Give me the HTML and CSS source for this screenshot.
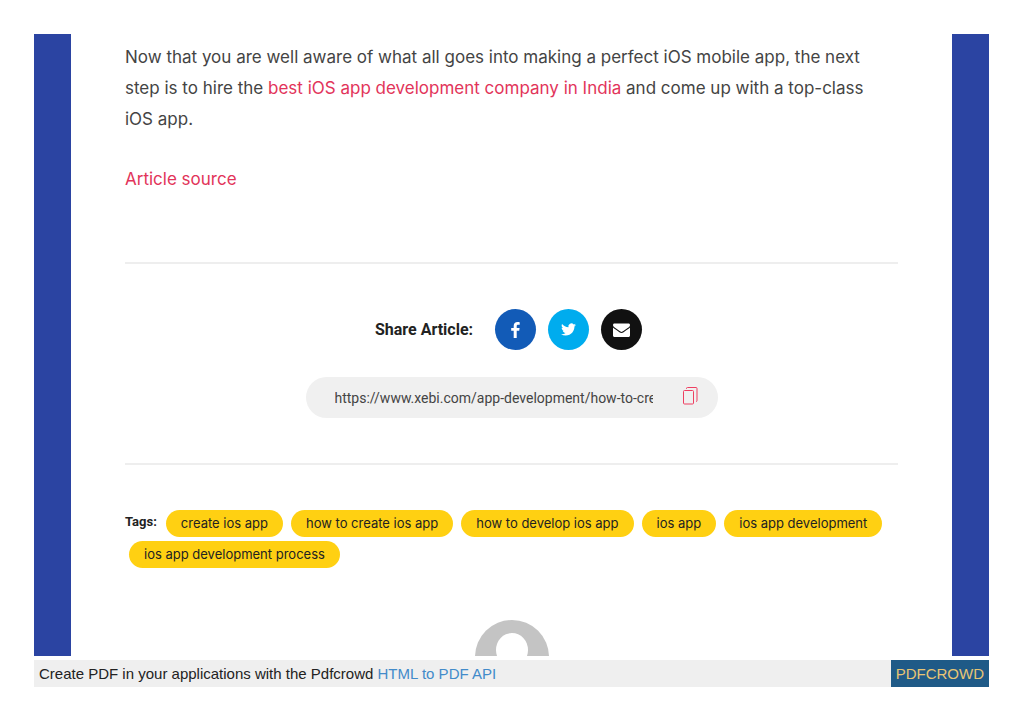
FILE: index.html
```
<!DOCTYPE html>
<html lang="en">
<head>
    <meta charset="UTF-8">
    <meta name="viewport" content="width=device-width, initial-scale=1.0">
    <title>How to create an iOS app</title>
    <link rel="stylesheet" href="styles.css">
</head>
<body>
    <div class="page">
        <main class="article">
            <p class="article-text">Now that you are well aware of what all goes into making a perfect iOS mobile app, the next step is to hire the <a href="#">best iOS app development company in India</a> and come up with a top-class iOS&nbsp;app.</p>
            <p class="article-text"><a href="#">Article source</a></p>

            <section class="share">
                <div class="share-row">
                    <span class="share-title">Share Article:</span>
                    <div class="share-icons">
                        <a href="#" class="share-btn facebook" aria-label="Facebook">
                            <svg width="9" height="16" viewBox="0 0 9 16"><path fill="#fff" d="M8.700.2v2.600H7.200c-1.200 0-1.500.6-1.500 1.400V6h2.900l-.4 2.800H5.700V16h-3V8.800H.2V6h2.500V3.900C2.700 1.400 4.200 0 6.500 0c1.100 0 2 .1 2.200.2z"/></svg>
                        </a>
                        <a href="#" class="share-btn twitter" aria-label="Twitter">
                            <svg width="15" height="15" viewBox="0 0 24 24"><path fill="#fff" d="M24 4.600c-.9.4-1.800.7-2.800.8 1-.6 1.800-1.600 2.200-2.700-1 .6-2 1-3.100 1.200A4.900 4.900 0 0 0 11.900 8.400C7.800 8.200 4.200 6.200 1.700 3.200.4 5.400 1 8.300 3.200 9.700c-.8 0-1.600-.2-2.200-.6v.1c0 2.300 1.600 4.400 3.900 4.800-.7.200-1.500.2-2.200.1.6 2 2.400 3.400 4.600 3.400A9.900 9.900 0 0 1 0 19.500 14 14 0 0 0 7.500 21.700c9.100 0 14-7.500 14-14v-.6c1-.7 1.800-1.600 2.500-2.500z"/></svg>
                        </a>
                        <a href="#" class="share-btn email" aria-label="Email">
                            <svg width="17" height="14" viewBox="0 0 17 14"><path fill="#fff" d="M0 4.600c.3.400.7.700 1.100 1 1.800 1.200 3.500 2.400 5.300 3.600.7.500 1.300.8 2.100.8s1.400-.3 2.100-.8c1.800-1.200 3.500-2.400 5.300-3.600.4-.3.800-.6 1.100-1v7.900c0 .8-.7 1.500-1.500 1.500h-14C.7 14 0 13.300 0 12.500zM1.500.5h14c.8 0 1.500.6 1.500 1.400 0 1.100-.8 2-1.700 2.700-1.600 1.100-3.200 2.200-4.900 3.400-.5.300-1.200.9-1.900.9s-1.400-.6-1.900-.9C4.900 6.800 3.300 5.700 1.700 4.600.9 4.100 0 3 0 2.100 0 1.200.5.5 1.500.5z"/></svg>
                        </a>
                    </div>
                </div>
                <div class="copy-box">
                    <input type="text" class="copy-url" aria-label="Article URL" value="https://www.xebi.com/app-development/how-to-create-ios-app/" readonly>
                    <button type="button" class="copy-btn" aria-label="Copy link">
                        <svg width="15" height="18" viewBox="0 0 15 18" fill="none" stroke="#ee3f61"><rect x=".5" y="3.500" width="10" height="13.500" rx="1"/><path d="M3.500 2V1.500a1 1 0 0 1 1-1H13a1 1 0 0 1 1 1v12a1 1 0 0 1-1 1"/></svg>
                    </button>
                </div>
            </section>

            <section class="tags">
                <span class="tags-title">Tags:</span>
                <a href="#" class="tag">create ios app</a>
                <a href="#" class="tag">how to create ios app</a>
                <a href="#" class="tag">how to develop ios app</a>
                <a href="#" class="tag">ios app</a>
                <a href="#" class="tag">ios app development</a>
                <a href="#" class="tag">ios app development process</a>
            </section>

            <div class="author">
                <svg width="74" height="74" viewBox="0 0 74 74"><circle cx="37" cy="37" r="37" fill="#c4c4c4"/><ellipse cx="37" cy="30" rx="16" ry="17" fill="#fff"/></svg>
            </div>
        </main>
        <footer class="pdf-bar">
            <p class="pdf-text">Create PDF in your applications with the Pdfcrowd <a href="#">HTML to PDF API</a></p>
            <a href="#" class="pdf-logo">PDFCROWD</a>
        </footer>
    </div>
</body>
</html>
```
FILE: styles.css
```
*{
    box-sizing: border-box;
}
body{
    margin: 0;
    background: #fff;
    font-family: Inter, "Open Sans", sans-serif;
    color: #444;
}
a{
    color: #e2345a;
    text-decoration: none;
}
svg{
    display: block;
}
.page{
    padding: 34px;
}
.article{
    padding: 8px 54px 0;
    border: solid #2b44a2;
    border-width: 0 37px;
}
.article-text{
    margin: 0 0 29px;
    font-size: 17px;
    line-height: 31px;
}

/* share */
.share{
    display: flex;
    flex-direction: column;
    align-items: center;
    gap: 27px;
    margin-top: 67px;
    padding: 45px 0;
    border: solid #eee;
    border-width: 2px 0;
}
.share-row{
    display: flex;
    align-items: center;
    gap: 22px;
    padding-right: 6px;
}
.share-title{
    font: bold 16px Roboto, sans-serif;
    color: #222;
}
.share-icons{
    display: flex;
    gap: 12px;
}
.share-btn{
    display: flex;
    align-items: center;
    justify-content: center;
    width: 41px;
    height: 41px;
    border-radius: 50%;
}
.facebook{
    background: #125bb7;
}
.twitter{
    background: #00acee;
}
.email{
    background: #111;
}
.copy-box{
    display: flex;
    align-items: center;
    gap: 30px;
    width: 412px;
    max-width: 100%;
    height: 41px;
    padding: 0 20px 0 29px;
    border-radius: 21px;
    background: #f0f0f0;
}
.copy-url{
    flex: 1;
    min-width: 0;
    padding: 0;
    border: 0;
    background: none;
    font: 14px Roboto, sans-serif;
    color: #444;
}
.copy-btn{
    padding: 0 0 3px;
    border: 0;
    background: none;
}

/* tags */
.tags{
    display: flex;
    flex-wrap: wrap;
    gap: 4px 0;
    padding-top: 45px;
}
.tags-title{
    margin-right: 5px;
    font: bold 13px/24px Roboto, sans-serif;
    color: #222;
}
.tag{
    margin: 0 4px;
    padding: 0 15px;
    border-radius: 14px;
    background: #ffd012;
    font-size: 13px;
    line-height: 27px;
    color: #222;
}

/* only the top of the avatar shows above the bar */
.author{
    display: flex;
    justify-content: center;
    height: 36px;
    margin-top: 52px;
    overflow: hidden;
}

.pdf-bar{
    display: flex;
    justify-content: space-between;
    margin-top: 4px;
    background: #efefef;
    font: 15px/27px "Liberation Sans", Arial, sans-serif;
}
.pdf-text{
    margin: 0;
    padding-left: 5px;
    color: #222;
}
.pdf-text a{
    color: #428bca;
}
.pdf-logo{
    padding: 0 5px;
    background: #1f5a87;
    color: #e8c574;
}
```
